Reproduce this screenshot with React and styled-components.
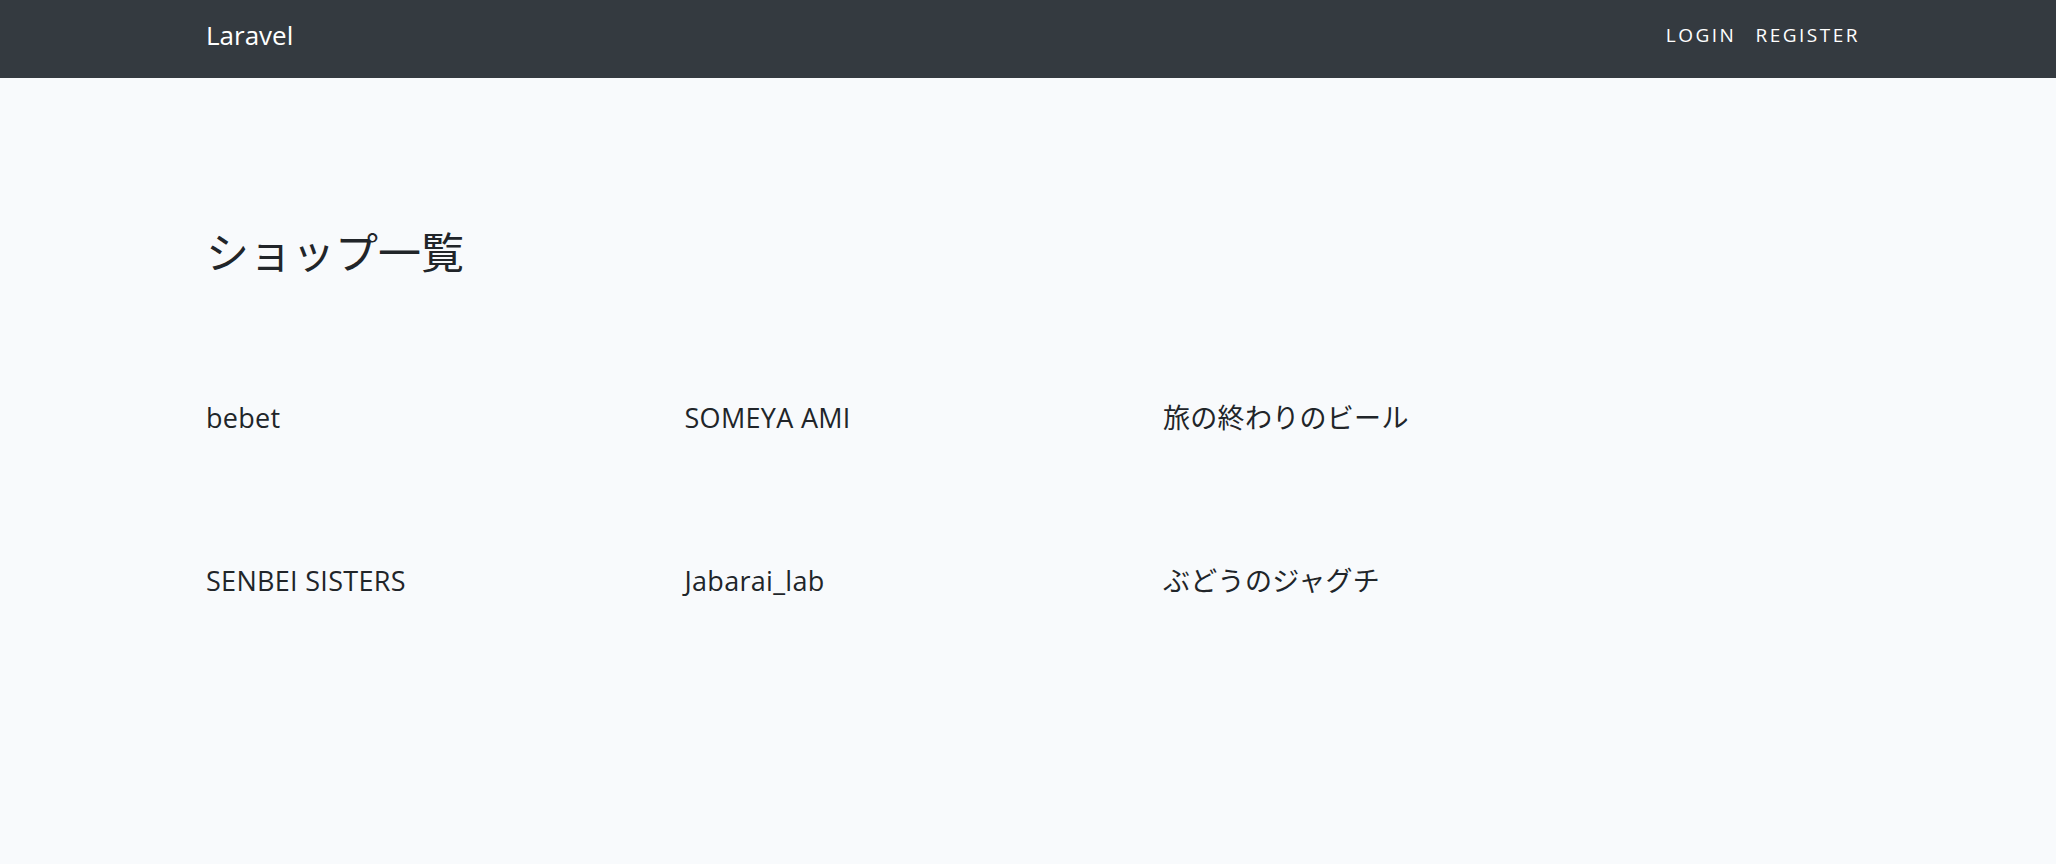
import React from 'react'
import styled, { createGlobalStyle } from 'styled-components'

const GlobalStyle = createGlobalStyle`
  body {
    margin: 0;
    background-color: #f8fafc;
    color: #212529;
    font-family: "Open Sans", "Noto Sans CJK JP", sans-serif;
  }
`

const Navbar = styled.nav`
  box-sizing: border-box;
  height: 78px;
  background-color: #343a40;
  display: flex;
  align-items: center;
  justify-content: space-between;
  padding: 0 196px 8px 206px;
`

const Brand = styled.a`
  color: #fff;
  font-size: 26px;
  text-decoration: none;
  line-height: 1;
`

const NavLinks = styled.div`
  display: flex;
  gap: 19px;
`

const NavLink = styled.a`
  color: #fff;
  font-size: 19px;
  letter-spacing: 2.5px;
  text-decoration: none;
  text-transform: uppercase;
`

const Main = styled.main`
  padding: 149px 0 0 206px;
`

const Title = styled.h1`
  margin: 0;
  font-weight: 400;
  font-size: 43px;
  line-height: 52px;
`

const ShopGrid = styled.div`
  display: grid;
  grid-template-columns: repeat(3, 478.5px);
  grid-auto-rows: 163px;
  margin-top: 121px;
`

const ShopName = styled.div`
  font-size: 27px;
  letter-spacing: 0.3px;
  line-height: 36px;
`

const shops = [
  'bebet',
  'SOMEYA AMI',
  '旅の終わりのビール',
  'SENBEI SISTERS',
  'Jabarai_lab',
  'ぶどうのジャグチ',
]

function App() {
  return (
    <>
      <GlobalStyle />
      <Navbar>
        <Brand href="#">Laravel</Brand>
        <NavLinks>
          <NavLink href="#">Login</NavLink>
          <NavLink href="#">Register</NavLink>
        </NavLinks>
      </Navbar>
      <Main>
        <Title>ショップ一覧</Title>
        <ShopGrid>
          {shops.map((name, idx) => (
            <ShopName key={idx}>{name}</ShopName>
          ))}
        </ShopGrid>
      </Main>
    </>
  )
}

export default App
